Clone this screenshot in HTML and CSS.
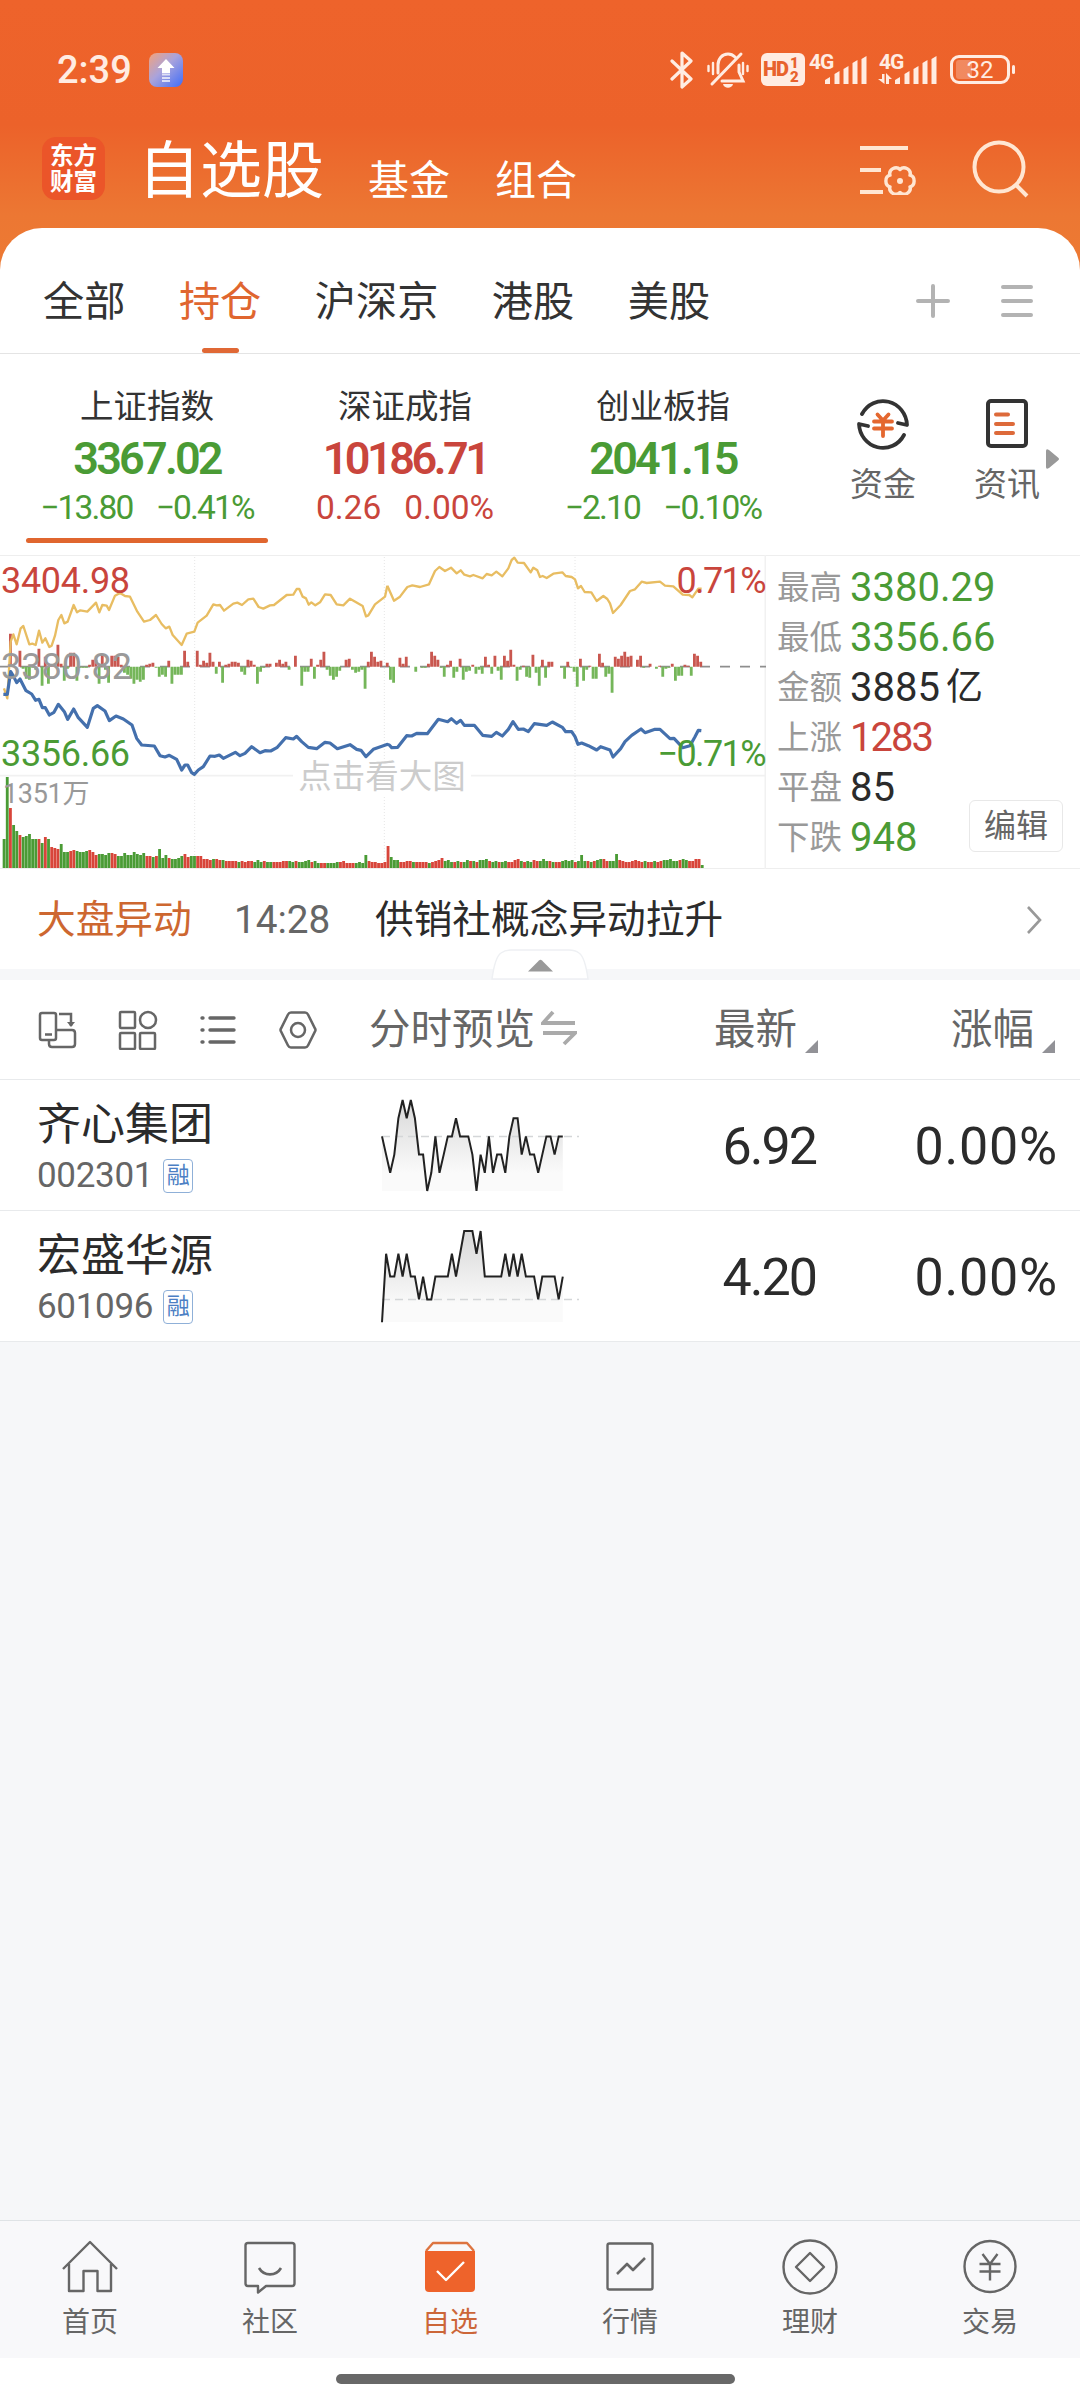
FILE: index.html
```
<!DOCTYPE html>
<html lang="zh-CN">
<head>
  <meta charset="UTF-8" />
  <meta name="viewport" content="width=device-width, initial-scale=1.0"/>
  <title>自选股</title>
  <link rel="stylesheet" href="styles.css">
</head>
<body>
  <div class="header">
    <!-- Status bar -->
    <div class="status">
      <span class="clock">2:39</span>
      <svg class="app-icon" viewBox="0 0 34 34">
        <defs>
          <linearGradient id="appBg" x1="0" y1="0" x2="1" y2="1">
            <stop offset="0" stop-color="#f3a27c"/>
            <stop offset="0.45" stop-color="#a9a3dc"/>
            <stop offset="1" stop-color="#3f6df8"/>
          </linearGradient>
        </defs>
        <rect width="34" height="34" rx="8" fill="url(#appBg)"/>
        <path d="M17 6l8.500 9h-4.500v5h-8v-5H8.500z" fill="#fff"/>
        <path d="M13 21.500h8M13 25h8M13 28h8" stroke="#fff" stroke-width="1.800" opacity="0.7"/>
      </svg>
      <div class="status-icons">
        <svg class="bluetooth" viewBox="0 0 24 38"><path d="M2 10l19 18-9 8V2l9 8L2 28" fill="none" stroke="#ffece2" stroke-width="3.200" stroke-linejoin="round" stroke-linecap="round"/></svg>
        <svg class="mute" viewBox="0 0 42 38">
          <g fill="none" stroke="#ffece2" stroke-width="3" stroke-linecap="round">
            <path d="M11 22v-8c0-6 4-11 10-11 3 0 5 1 7 3M32 14v7l4 9H15M5 33L34 3"/>
            <path d="M1.500 15v5M6 12v11M36 12v11M40.500 15v5" stroke-width="2.400"/>
          </g>
          <path d="M16 33h10c-1 5-9 5-10 0z" fill="#ffece2"/>
        </svg>
        <span class="hd">HD<span class="hd-sim"><i>1</i><i>2</i></span></span>
        <svg class="signal" viewBox="0 0 58 34">
          <text x="0" y="16">4G</text>
          <path d="M16 31v-4l5-3v7zM25.500 31V21l5-3v13zM34.500 31V16l5-3v18zM43.500 31V10l5-3v24zM52.500 31V6l5-3v28z"/>
        </svg>
        <svg class="signal signal-2" viewBox="0 0 58 34">
          <text x="0" y="16">4G</text>
          <path d="M16 31v-4l5-3v7zM25.500 31V21l5-3v13zM34.500 31V16l5-3v18zM43.500 31V10l5-3v24zM52.500 31V6l5-3v28z"/>
          <path d="M3 21h2.500v10L-1 26h4zM7 31V20l6 6h-3v5z"/>
        </svg>
        <span class="battery"><i class="battery-fill"></i>32</span>
      </div>
    </div>
    <!-- Title bar -->
    <div class="title-bar">
      <div class="logo">东方<br>财富</div>
      <h1>自选股</h1>
      <span class="title-link">基金</span>
      <span class="title-link">组合</span>
      <svg class="icon-filter" viewBox="0 0 56 52" fill="none" stroke="#ffe6d2" stroke-width="4">
        <path d="M0 5h48M0 27h21M0 49h23"/>
        <path d="M50 32.200C55.500 33.500 55.500 42.500 50 43.800 51.700 49.400 44.100 53.800 40 49.500 35.900 53.800 28.300 49.400 30 43.800 24.500 42.500 24.500 33.500 30 32.200 28.300 26.600 35.900 22.200 40 26.500 44.100 22.200 51.700 26.600 50 32.200z" stroke-width="3.400" stroke-linejoin="round"/>
        <circle cx="40" cy="38" r="3" fill="#ffe6d2" stroke="none"/>
      </svg>
      <svg class="icon-search" viewBox="0 0 58 58" fill="none" stroke="#ffe6d2" stroke-width="4">
        <circle cx="27" cy="27" r="24.500"/>
        <path d="M43 44l12 12"/>
      </svg>
    </div>
  </div>

  <div class="card">
    <div class="tabs">
      <span class="tab">全部</span>
      <span class="tab active">持仓</span>
      <span class="tab">沪深京</span>
      <span class="tab">港股</span>
      <span class="tab">美股</span>
      <svg class="icon-plus" viewBox="0 0 34 34"><path d="M17 2v30M2 17h30"/></svg>
      <svg class="icon-menu" viewBox="0 0 34 34"><path d="M3 3h28M3 17h28M3 31h28"/></svg>
    </div>

    <!-- Index quotes -->
    <div class="indices">
      <div class="index down active">
        <div class="index-name">上证指数</div>
        <div class="index-value">3367.02</div>
        <div class="index-change"><span>−13.80</span><span>−0.41%</span></div>
      </div>
      <div class="index up">
        <div class="index-name">深证成指</div>
        <div class="index-value">10186.71</div>
        <div class="index-change"><span>0.26</span><span>0.00%</span></div>
      </div>
      <div class="index down">
        <div class="index-name">创业板指</div>
        <div class="index-value">2041.15</div>
        <div class="index-change"><span>−2.10</span><span>−0.10%</span></div>
      </div>
      <div class="shortcut">
        <svg viewBox="0 0 54 54" fill="none" stroke="#333" stroke-width="3.800" stroke-linecap="round" stroke-linejoin="round">
          <path d="M6 17A24 25 0 0 1 51 28l-9-2M48 38A24 25 0 0 1 3 27l9 2"/>
          <path d="M21.500 17.500l5.500 6 5.500-6M18 24.500h18M18 31.500h18M27 24v15" stroke="#e4672f"/>
        </svg>
        <span>资金</span>
      </div>
      <div class="shortcut">
        <svg viewBox="0 0 54 54" fill="none" stroke="#333" stroke-width="4" stroke-linecap="round" stroke-linejoin="round">
          <rect x="8" y="4" width="38" height="45" rx="3"/>
          <path d="M16 17.500h12M16 27h17M16 36h17" stroke="#dd6a3a"/>
        </svg>
        <span>资讯</span>
      </div>
      <svg class="more-arrow" viewBox="0 0 13 20"><path d="M0 2q0-3 3-1l9 7.500q2 1.500 0 3L3 19q-3 2-3-1z" fill="#999"/></svg>
    </div>

    <!-- Intraday chart -->
    <div class="market">
      <div class="chart">
        <svg id="chart" viewBox="0 30 2298 942">
          <g fill="none" stroke="#f1f1f1" stroke-width="5">
            <path d="M0 692h2295M2296 30v942"/>
            <path d="M584 36v933M1153 36v933M1725 36v933" stroke="#e6e6e6" stroke-width="3" stroke-dasharray="3 6"/>
          </g>
          <path d="M0 365h2298" stroke="#8e8e8e" stroke-width="5" stroke-dasharray="30 30"/>
          <path id="flowUp" fill="#c9574f"/>
          <path id="flowDown" fill="#75b65a"/>
          <path id="volUp" fill="#d8453a"/>
          <path id="volDown" fill="#4a9b35"/>
          <g class="line-avg">
            <polyline points="12,430 22,460 32,290 40,268 50,298 62,250 70,243 88,298 97,296 107,300 117,257 127,293 136,280 148,306 155,302 165,272 175,225 184,210 193,235 203,230 221,180 231,202 241,196 262,200 288,173 298,202 307,180 320,182 327,195 345,152 360,144 375,153 390,155 412,200 432,230 450,225 468,210 485,237 497,250 508,245 518,270 545,300 560,266 583,260 593,233 620,212 640,178 650,181 660,180 672,197 700,176 712,173 726,180 745,163 760,161 776,186 790,191 810,181 822,180 860,150 880,149 890,132 898,132 908,155 918,160 926,179 934,172 946,181 960,172 975,148 992,150 1010,178 1030,181 1050,161 1088,183 1098,214 1105,211 1125,178 1155,155 1162,122"/>
            <polyline transform="translate(1140 0)" points="22,122 32,145 42,167 60,155 82,126 97,121 120,126 147,118 165,78 178,66 195,78 213,68 230,85 242,76 253,89 270,94 280,90 308,100 320,87 335,91 349,80 367,94 385,70 395,45 403,38 413,53 432,54 452,82 460,68 472,76 480,96 488,93 500,99 520,86 547,82 557,93 575,96 585,103 594,130 603,123 614,141 634,142 650,168 670,153 682,162 690,175 699,204 722,180 750,138 765,133 785,110 800,114 840,110 855,122 880,124 908,149 928,150 937,157 955,131 965,131"/>
          </g>
          <g class="line-price">
            <polyline points="10,448 22,448 32,380 41,395 50,413 60,402 78,437 95,447 107,466 117,463 127,488 136,488 148,510 162,502 175,478 193,500 203,523 221,492 235,518 262,547 280,490 292,482 315,498 328,527 348,513 370,522 396,540 410,580 425,600 463,603 480,632 495,636 508,631 530,643 545,675 555,660 563,660 575,683 583,688 595,675 610,665 630,633 645,634 658,630 670,640 706,622 720,632 735,625 755,605 780,623 795,617 812,618 832,607 857,578 880,582 890,574 905,590 925,607 950,611 975,592 990,594 1012,611 1050,599 1070,613 1083,616 1098,635 1120,613 1163,598"/>
            <polyline transform="translate(1140 0)" points="20,598 28,600 35,608 53,607 80,572 95,573 110,565 142,566 175,523 203,530 214,521 230,535 242,526 253,541 283,541 308,571 335,574 349,562 367,573 385,553 399,530 415,553 430,552 445,560 463,536 500,541 517,531 547,547 557,560 575,560 585,575 594,598 605,594 625,602 650,615 662,605 690,615 699,636 722,611 735,590 755,571 783,552 795,563 825,553 840,553 870,581 882,580 908,608 930,602 945,575 955,556 964,557"/>
          </g>
        </svg>
        <span class="label top left up">3404.98</span>
        <span class="label middle left">3380.82</span>
        <span class="label bottom left down">3356.66</span>
        <span class="label top right up">0.71%</span>
        <span class="label bottom right down">−0.71%</span>
        <span class="label volume">1351万</span>
        <span class="hint">点击看大图</span>
      </div>
      <div class="stats">
        <div class="stat down"><span>最高</span>3380.29</div>
        <div class="stat down"><span>最低</span>3356.66</div>
        <div class="stat"><span>金额</span>3885<em>亿</em></div>
        <div class="stat up short"><span>上涨</span>1283</div>
        <div class="stat"><span>平盘</span>85</div>
        <div class="stat down"><span>下跌</span>948</div>
        <button class="edit">编辑</button>
      </div>
    </div>

    <div class="news">
      <span class="news-tag">大盘异动</span>
      <span class="news-time">14:28</span>
      <span class="news-text">供销社概念异动拉升</span>
      <svg class="chevron" viewBox="0 0 16 30"><path d="M2 2l12 13L2 28" fill="none" stroke="#999" stroke-width="2.600"/></svg>
      <svg class="handle" viewBox="0 0 98 31">
        <path d="M1 30Q4 8 10 4Q14 1 20 1h58q6 0 10 3Q94 8 97 30z" fill="#fff" stroke="#eef0f3" stroke-width="1.500"/>
        <path d="M37 22.500l11-11q1.500-1.500 3 0l11 11z" fill="#999"/>
      </svg>
    </div>
  </div>

  <!-- Watch list -->
  <div class="list">
    <div class="list-head">
      <div class="tools">
        <svg viewBox="0 0 40 40">
          <rect x="2" y="3" width="16" height="27" rx="2"/><path d="M7 24.500h7M21 4h12v12M11 31v3q0 3 3 3h20q3 0 3-3V23q0-3-3-3H19"/><path d="M29 12h8l-4 5z" fill="#666" stroke="none"/>
        </svg>
        <svg viewBox="0 0 40 40">
          <rect x="2" y="2" width="15" height="16" rx="1"/><circle cx="30" cy="10" r="8"/><rect x="2" y="23" width="15" height="16" rx="1"/><rect x="22" y="23" width="15" height="16" rx="1"/>
        </svg>
        <svg viewBox="0 0 40 40">
          <path d="M12 8h24M12 20h24M12 32h24M4 8h1M4 20h1M4 32h1" stroke-width="3.400" stroke-linecap="round"/>
        </svg>
        <svg viewBox="0 0 40 40">
          <path d="M13 2.500h14q2 0 3 2l7 14q1 1.500 0 3l-7 14q-1 2-3 2H13q-2 0-3-2L3 21.500q-1-1.500 0-3l7-14q1-2 3-2z"/><circle cx="20" cy="20" r="7"/>
        </svg>
      </div>
      <div class="col-trend">分时预览
        <svg viewBox="0 0 36 36"><path d="M12 2L2 13h32M2 23h32L23 34" fill="none" stroke="#aaa" stroke-width="3.800"/></svg>
      </div>
      <div class="col-price">最新<i class="sort"></i></div>
      <div class="col-rate">涨幅<i class="sort"></i></div>
    </div>
    <div class="row">
      <div class="stock">
        <div class="stock-name">齐心集团</div>
        <div class="stock-code">002301<b>融</b></div>
      </div>
      <svg class="spark" id="spark1" viewBox="0 0 200 96"></svg>
      <div class="price">6.92</div>
      <div class="rate">0.00%</div>
    </div>
    <div class="row">
      <div class="stock">
        <div class="stock-name">宏盛华源</div>
        <div class="stock-code">601096<b>融</b></div>
      </div>
      <svg class="spark" id="spark2" viewBox="0 0 200 96"></svg>
      <div class="price">4.20</div>
      <div class="rate">0.00%</div>
    </div>
  </div>

  <!-- Bottom navigation -->
  <div class="nav">
    <div class="nav-item">
      <svg viewBox="0 0 60 60"><path d="M3 32L30 5l27 27M9 27v27h14.500V34h14v20H51V27"/></svg>
      首页
    </div>
    <div class="nav-item">
      <svg viewBox="0 0 60 60"><path d="M8 6h44q2.500 0 2.500 2.500v38q0 2.500-2.500 2.500H26l-8 6.500V49H8q-2.500 0-2.500-2.500v-38Q5.500 6 8 6z"/><path d="M19 31c5 8.500 17 8.500 22 0" stroke-width="2.600"/></svg>
      社区
    </div>
    <div class="nav-item active">
      <svg viewBox="0 0 60 60"><path d="M6 14l7-8h34l7 8" stroke="#dd7440"/><path d="M5 14h50v37q0 4-4 4H9q-4 0-4-4z" fill="#ee632b" stroke="none"/><path d="M17 34l9 9 18-18" stroke="#fff"/></svg>
      自选
    </div>
    <div class="nav-item">
      <svg viewBox="0 0 60 60"><rect x="7.500" y="6.500" width="45" height="46" rx="2"/><path d="M17 37l10-10 6 6 12-12" stroke-width="2.600"/></svg>
      行情
    </div>
    <div class="nav-item">
      <svg viewBox="0 0 60 60"><circle cx="30" cy="30" r="26.500"/><path d="M30 16l14 14-14 14-14-14z"/></svg>
      理财
    </div>
    <div class="nav-item">
      <svg viewBox="0 0 60 60"><circle cx="30" cy="29.500" r="25.500"/><path d="M22.500 17l7.500 10 7.500-10M19.500 27h21M19.500 34.500h21M30 27v16.500"/></svg>
      交易
    </div>
  </div>
  <div class="home-bar"></div>

  <script src="script.js"></script>
</body>
</html>
```
FILE: styles.css
```
* {
  margin: 0;
  padding: 0;
  box-sizing: border-box;
}
body {
  width: 1080px;
  height: 2400px;
  display: flex;
  flex-direction: column;
  background: #f6f7f9;
  color: #2b2b2b;
  font-family: Roboto, "Noto Sans CJK SC", sans-serif;
  overflow: hidden;
}
svg {
  display: block;
  flex: none;
}
i, em {
  font-style: normal;
}
.up {
  color: #c9453c;
}
.down {
  color: #4a9b35;
}

/* header */
.header {
  height: 272px;
  background: linear-gradient(#ee632b 0, #ec622a 125px, #ec7733 215px, #ed7a33 272px);
  color: #fff;
}
.status {
  height: 124px;
  padding: 15px 65px 0 57px;
  display: flex;
  align-items: center;
  color: #ffece2;
}
.clock {
  font-size: 38px;
  font-weight: 500;
  line-height: 40px;
  width: 92px;
}
.app-icon {
  width: 34px;
  height: 34px;
}
.status-icons {
  margin-left: auto;
  display: flex;
  align-items: center;
}
.bluetooth {
  width: 24px;
  height: 38px;
  margin-right: 13px;
}
.mute {
  width: 42px;
  height: 38px;
  margin-right: 12px;
}
.hd {
  width: 44px;
  height: 33px;
  border-radius: 6px;
  background: #ffece2;
  color: #e8622c;
  font-size: 20px;
  font-weight: 900;
  line-height: 33px;
  padding-left: 2px;
  letter-spacing: -1px;
  display: flex;
  margin-right: 4px;
}
.hd-sim {
  display: flex;
  flex-direction: column;
  font-size: 15px;
  line-height: 14px;
  padding: 3px 0 0 2px;
}
.signal {
  width: 58px;
  height: 34px;
  fill: #ffece2;
  font-size: 21px;
  font-weight: 700;
  letter-spacing: -1px;
  overflow: visible;
}
.signal-2 {
  margin: 0 13px 0 12px;
}
.battery {
  position: relative;
  width: 60px;
  height: 29px;
  border: 3px solid #ffece2;
  border-radius: 9px;
  font-size: 24px;
  line-height: 24px;
  text-align: center;
  margin-right: 5px;
}
.battery::after {
  content: "";
  position: absolute;
  right: -8px;
  top: 7px;
  width: 3px;
  height: 9px;
  border-radius: 2px;
  background: #ffece2;
}
.battery-fill {
  position: absolute;
  left: 3px;
  top: 2px;
  width: 16px;
  height: 19px;
  border-radius: 3px;
  background: rgba(255, 255, 255, 0.25);
}
.title-bar {
  display: flex;
  height: 104px;
  padding-left: 42px;
}
.logo {
  width: 63px;
  height: 63px;
  margin-top: 13px;
  border-radius: 14px;
  background: #eb5529;
  font-size: 23.500px;
  line-height: 26px;
  font-weight: 700;
  text-align: center;
  padding-top: 6px;
}
h1 {
  margin: 6px 0 0 33px;
  font-size: 62px;
  font-weight: 400;
  line-height: 84px;
  width: 230px;
}
.title-link {
  font-size: 41px;
  line-height: 60px;
  margin-top: 27px;
  width: 127px;
}
.icon-filter {
  width: 56px;
  height: 52px;
  margin: 19px 0 0 238px;
}
.icon-search {
  width: 58px;
  height: 58px;
  margin: 16px 0 0 56px;
}

/* white card */
.card {
  height: 741px;
  margin-top: -44px;
  background: #fff;
  border-radius: 42px 42px 0 0;
}
.tabs {
  height: 126px;
  border-bottom: 1px solid #e4e4e4;
  display: flex;
  gap: 53.500px;
  padding: 0 46px 0 43px;
  align-items: center;
}
.tab {
  position: relative;
  font-size: 41.200px;
  height: 126px;
  line-height: 148px;
  color: #333;
}
.tab.active {
  color: #e0662f;
}
.tab.active::after {
  content: "";
  position: absolute;
  left: 23px;
  bottom: 1px;
  width: 37px;
  height: 5px;
  border-radius: 3px;
  background: #e06835;
}
.icon-plus, .icon-menu {
  width: 34px;
  height: 34px;
  margin-top: 20px;
  fill: none;
  stroke: #b3b3b3;
  stroke-width: 4;
  stroke-linecap: round;
}
.icon-plus {
  margin-left: auto;
}
.icon-menu {
  margin-left: -3px;
}

.indices {
  position: relative;
  height: 201px;
  display: flex;
  padding-left: 18px;
}
.index {
  position: relative;
  width: 258px;
  text-align: center;
  padding-top: 28px;
}
.index-name {
  color: #333;
  font-size: 33.500px;
  line-height: 50px;
}
.index-value {
  font-size: 45px;
  font-weight: 600;
  line-height: 53px;
  letter-spacing: -2.800px;
}
.index.up .index-value {
  letter-spacing: -3.500px;
}
.index-change {
  display: flex;
  justify-content: center;
  gap: 23px;
  font-size: 33.500px;
  line-height: 46px;
  letter-spacing: -1.800px;
}
.index.up .index-change {
  letter-spacing: 0;
}
.index.active::after {
  content: "";
  position: absolute;
  left: 8px;
  bottom: 12px;
  width: 242px;
  height: 5px;
  border-radius: 3px;
  background: #e0662f;
}
.shortcut {
  width: 124px;
  padding-top: 43px;
  display: flex;
  flex-direction: column;
  align-items: center;
  font-size: 33px;
  line-height: 50px;
  color: #666;
}
.shortcut:nth-child(4) {
  margin-left: 29px;
}
.shortcut svg {
  width: 54px;
  height: 54px;
  margin-bottom: 8px;
}
.shortcut span {
  margin-top: 1px;
}
.more-arrow {
  position: absolute;
  left: 1046px;
  top: 95px;
  width: 13px;
  height: 20px;
}

/* chart + stats */
.market {
  height: 314px;
  display: flex;
  box-shadow: inset 0 1px #eee, inset 0 -1px #eee;
}
.chart {
  position: relative;
  width: 766px;
}
#chart {
  width: 766px;
  height: 314px;
}
.line-avg, .line-price {
  fill: none;
  stroke-linejoin: round;
}
.line-avg {
  stroke: #e8bd62;
  stroke-width: 7;
}
.line-price {
  stroke: #4470ad;
  stroke-width: 9.500;
}
.label {
  position: absolute;
  font-size: 36px;
  line-height: 36px;
  letter-spacing: -0.300px;
}
.left {
  left: 1px;
}
.right {
  right: 1px;
  letter-spacing: -1.600px;
}
.top {
  top: 8px;
}
.middle {
  top: 94px;
  color: #9a9a9a;
  letter-spacing: 0;
}
.bottom {
  top: 181px;
}
.volume {
  left: 3px;
  top: 221px;
  font-size: 27px;
  color: #999;
}
.hint {
  position: absolute;
  left: 293px;
  top: 204px;
  width: 178px;
  text-align: center;
  background: #fff;
  font-size: 33.500px;
  line-height: 36px;
  color: #ccc;
}
.stats {
  position: relative;
  flex: 1;
  padding: 8px 0 0 11px;
}
.stat {
  font-size: 40px;
  line-height: 50px;
  height: 50px;
  display: flex;
}
.stat.short {
  letter-spacing: -2px;
}
.stat span {
  font-size: 32.500px;
  letter-spacing: 0;
  color: #999;
  width: 73px;
}
.stat em {
  font-size: 37px;
  margin-left: 6px;
}
.edit {
  position: absolute;
  left: 203px;
  top: 245px;
  width: 94px;
  height: 52px;
  border: 1px solid #e8e8e8;
  border-radius: 6px;
  background: #fff;
  font: 32px/50px Roboto, "Noto Sans CJK SC", sans-serif;
  color: #666;
}

.news {
  position: relative;
  height: 100px;
  display: flex;
  align-items: center;
  font-size: 38.700px;
  line-height: 50px;
  padding: 2px 38px 0 37px;
}
.news-tag {
  color: #cd6730;
  width: 197px;
}
.news-time {
  color: #666;
  width: 141px;
}
.chevron {
  width: 16px;
  height: 30px;
  margin-left: auto;
}
.handle {
  position: absolute;
  left: 491px;
  top: 80px;
  width: 98px;
  height: 31px;
}

/* watch list */
.list {
  margin-top: 11px;
  background: #fff;
}
.list-head {
  height: 100px;
  display: flex;
  align-items: center;
  border-bottom: 1px solid #e8eaec;
  font-size: 41.500px;
  line-height: 60px;
  color: #666;
}
.tools {
  width: 369px;
  padding-left: 38px;
  display: flex;
  gap: 40px;
}
.tools svg {
  width: 40px;
  height: 40px;
  fill: none;
  stroke: #666;
  stroke-width: 2.500;
}
.col-trend {
  width: 330px;
  display: flex;
  align-items: center;
}
.col-trend svg {
  width: 36px;
  height: 36px;
  margin: -3px 0 0 6px;
}
.col-price, .col-rate {
  display: flex;
  align-items: flex-end;
  margin-left: 15px;
}
.col-rate {
  margin-left: 133px;
}
.sort {
  margin: 0 0 7px 8px;
  border-left: 13px solid transparent;
  border-bottom: 13px solid #929297;
}
.row {
  height: 131px;
  display: flex;
  align-items: center;
  border-bottom: 1px solid #e8eaec;
  padding-top: 2px;
}
.stock {
  width: 380px;
  padding: 4px 0 0 37px;
}
.stock-name {
  font-size: 44px;
  line-height: 56px;
}
.stock-code {
  display: flex;
  align-items: center;
  font-size: 35px;
  line-height: 46px;
  letter-spacing: -0.300px;
  color: #666;
}
.stock-code b {
  margin-left: 10px;
  width: 30px;
  height: 34px;
  border: 1.500px solid #8fb0d8;
  border-radius: 4px;
  font-size: 23px;
  font-weight: 400;
  line-height: 32px;
  letter-spacing: 0;
  text-align: center;
  color: #4c7fc4;
}
.spark {
  width: 200px;
  height: 96px;
}
.price, .rate {
  font-size: 52px;
  line-height: 60px;
  padding-top: 2px;
  text-align: right;
  letter-spacing: -2px;
}
.price {
  width: 236px;
}
.rate {
  width: 242px;
  letter-spacing: 0.800px;
}

/* bottom navigation */
.nav {
  margin-top: auto;
  height: 138px;
  border-top: 1px solid #dfe3e6;
  background: #f8f8fa;
  display: flex;
}
.nav-item {
  width: 180px;
  padding-top: 16px;
  display: flex;
  flex-direction: column;
  align-items: center;
  font-size: 28px;
  line-height: 40px;
  color: #666;
}
.nav-item svg {
  width: 60px;
  height: 60px;
  margin-bottom: 6px;
  fill: none;
  stroke: #666;
  stroke-width: 2.400;
  stroke-linejoin: round;
}
.nav-item.active {
  color: #cc6638;
}
.home-bar {
  height: 42px;
  background: #fff;
  padding: 16px 345px 0 336px;
}
.home-bar::after {
  content: "";
  display: block;
  height: 10px;
  border-radius: 5px;
  background: #686868;
}
```
FILE: script.js
```
// minute bars, positive = red, negative = green
const flow = [
  0, 0, 33, 0, 0, 16, -2, -12, -13, -1, -3, 18, -19, 10, -17, 2, 1, 22, 3, -14, -2, 14, 14, -14, -1, -1, -1, 2, 7, 7,
  -17, 12, -3, -16, 11, 11, 10, 2, -6, -8, -12, -17, -13, -15, -13, 2, 3, 4, -1, -10, -8, -10, 6, -17, -8, -8, -8, 16, 5, 0,
  0, 16, 2, 6, 4, 14, 5, -7, 5, -16, 2, 3, 5, 5, 4, -5, -8, 7, 6, 2, -17, -5, -1, 3, 3, 0, 4, 7, 3, 5,
  -3, 0, 11, 0, -19, -5, -5, 8, -12, 2, 7, 15, -3, -9, -13, -10, -4, 0, 7, 8, -3, -6, -5, -3, -22, 5, 15, 10, 5, 6,
  0, 4, -13, -16, 0, 9, 3, 10, 0, 0, -5, 0, -1, -1, 3, 15, 11, 7, -1, -10, 2, 6, -11, -5, 8, -13, -5, -4, 2, -7,
  -3, -7, 10, 2, -7, 11, -4, -13, 11, 6, 17, 2, -14, -3, 1, -10, -11, 12, -6, -19, 7, -11, 5, 5, 0, 0, -1, -12, 5, -1,
  -5, -20, 8, -14, -3, 1, -12, -12, 13, 4, -10, -7, -26, 10, 8, 11, 15, 10, 11, 0, 7, 11, -1, 0, 3, 0, -2, 1, -10, -2,
  -1, 3, -14, -9, -9, 2, 1, -9, 13, 11, 5
];
const volume = [
  -29, -91, 60, -43, -37, 33, -31, -32, -34, -29, -29, 29, -25, 31, -29, 21, 20, 19, -24, -16, -16, 17, 18, -17, -16, -16, -17, 18, 16, 13,
  -14, -14, -13, -15, 15, 14, -12, -12, -15, -13, -13, -16, -14, -13, -15, 12, 12, -11, 12, -19, -10, -13, 10, -9, -9, -10, -12, 14, 11, -12,
  -12, 12, 12, 9, 9, 8, -9, 9, 8, -8, 7, 7, 7, 7, -6, 7, 6, 7, 7, -6, -8, -6, 7, -6, -6, 6, 6, 6, 7, 7,
  -7, -6, 7, -6, -6, -7, -8, 6, -7, -5, 5, 5, -5, -5, -5, -6, 6, 7, 5, 5, 5, -5, -6, -5, -13, 7, 6, 6, 5, 5,
  6, 22, -11, -8, -8, 6, 6, 7, 7, -6, 6, 6, 6, 6, -5, 6, 7, 8, 10, -7, -8, -6, 6, -7, 6, -6, -8, 7, -7, 6,
  -8, -8, -9, 7, -6, -7, 6, -6, -7, 6, 6, 8, 9, -7, 6, -7, -6, 8, 7, -7, -9, -7, 7, -6, 6, 6, -7, -8, -7, -8,
  6, -7, -13, -7, 7, -6, 7, -8, -9, 9, 7, -7, -7, -14, 8, 7, 6, 6, 7, 8, 7, 6, -7, 6, 6, -7, 6, 7, -8, -8,
  -9, -7, -7, 8, -9, -8, 7, 7, 9, 9, -3
];

function bars(data, base, pitch, sign, up) {
  let d = "";
  data.forEach((v, i) => {
    if (v * sign <= 0) return;
    const h = v * 3 * (up ? sign : 1);
    d += `M${(8 + i * pitch).toFixed(1)} ${base}h8.500v${-h}h-8.500z`;
  });
  return d;
}

document.getElementById("flowUp").setAttribute("d", bars(flow, 365, 9.5, 1));
document.getElementById("flowDown").setAttribute("d", bars(flow, 365, 9.5, -1));
document.getElementById("volUp").setAttribute("d", bars(volume, 969, 9.52, 1, true));
document.getElementById("volDown").setAttribute("d", bars(volume, 969, 9.52, -1, true));

// sparkline: one price level per step, 0 is the top
function spark(id, levels, step, closeLevel) {
  const pts = levels.map((l, i) => `${(2 + i * 4.11).toFixed(1)},${(2 + l * step).toFixed(1)}`).join(" ");
  const close = 2 + closeLevel * step;
  document.getElementById(id).innerHTML = `
    <defs><linearGradient id="${id}Fill" x1="0" y1="0" x2="0" y2="1">
      <stop offset="0" stop-color="#d8d8d8"/><stop offset="0.8" stop-color="#fafafa"/><stop offset="1" stop-color="#fafafa"/>
    </linearGradient></defs>
    <polygon points="2,93 ${pts} 182.8,93" fill="url(#${id}Fill)"/>
    <path d="M2 ${close}h197" stroke="#d4d6d8" stroke-width="1.500" stroke-dasharray="8 5"/>
    <polyline points="${pts}" fill="none" stroke="#222" stroke-width="2"/>`;
}

spark("spark1", [2, 3, 4, 3, 1, 0, 1, 0, 1, 3, 3, 5, 4, 2, 4, 3, 2, 2, 1, 2, 2, 2, 3, 5, 3, 4, 2, 4, 3, 3, 4, 2, 1, 1, 3, 2, 3, 3, 4, 3, 2, 2, 3, 2, 2], 18.2, 2);
spark("spark2", [4, 1, 2, 2, 1, 2, 1, 2, 2, 3, 2, 3, 3, 2, 2, 2, 2, 1, 2, 1, 0, 0, 0, 1, 0, 2, 2, 2, 2, 2, 1, 2, 1, 2, 1, 2, 2, 2, 3, 2, 2, 2, 2, 3, 2], 22.8, 3);
```
